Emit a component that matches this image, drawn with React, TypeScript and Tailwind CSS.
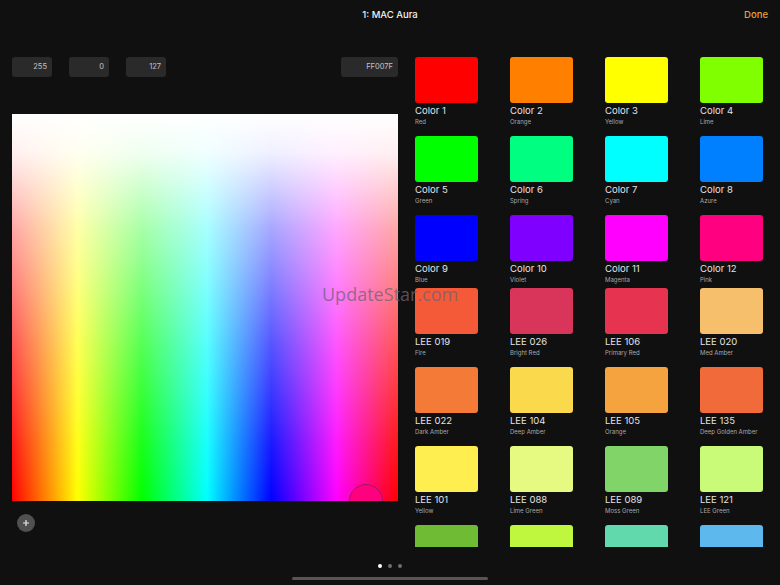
const font = { fontFamily: "Inter, 'Noto Sans', sans-serif" };

type Swatch = { name: string; sub: string; color: string };

const topColors: Swatch[] = [
  { name: "Color 1", sub: "Red", color: "#ff0000" },
  { name: "Color 2", sub: "Orange", color: "#ff8000" },
  { name: "Color 3", sub: "Yellow", color: "#ffff00" },
  { name: "Color 4", sub: "Lime", color: "#80ff00" },
  { name: "Color 5", sub: "Green", color: "#00ff00" },
  { name: "Color 6", sub: "Spring", color: "#00ff80" },
  { name: "Color 7", sub: "Cyan", color: "#00ffff" },
  { name: "Color 8", sub: "Azure", color: "#0080ff" },
  { name: "Color 9", sub: "Blue", color: "#0000ff" },
  { name: "Color 10", sub: "Violet", color: "#8000ff" },
  { name: "Color 11", sub: "Magenta", color: "#ff00ff" },
  { name: "Color 12", sub: "Pink", color: "#ff0080" },
];

const leeColors: Swatch[] = [
  { name: "LEE 019", sub: "Fire", color: "#f45a38" },
  { name: "LEE 026", sub: "Bright Red", color: "#d9345a" },
  { name: "LEE 106", sub: "Primary Red", color: "#e63450" },
  { name: "LEE 020", sub: "Med Amber", color: "#f5bf6c" },
  { name: "LEE 022", sub: "Dark Amber", color: "#f47a38" },
  { name: "LEE 104", sub: "Deep Amber", color: "#fbd94c" },
  { name: "LEE 105", sub: "Orange", color: "#f5a33f" },
  { name: "LEE 135", sub: "Deep Golden Amber", color: "#f16b3a" },
  { name: "LEE 101", sub: "Yellow", color: "#ffee50" },
  { name: "LEE 088", sub: "Lime Green", color: "#e6f981" },
  { name: "LEE 089", sub: "Moss Green", color: "#80d468" },
  { name: "LEE 121", sub: "LEE Green", color: "#c9fb78" },
];

// last row is cut off by the scroller, only the top of the swatches shows
const cutOffColors = ["#6fbb33", "#bff73f", "#62d9ac", "#5db8ee"];

function SwatchCell({ swatch }: { swatch: Swatch }) {
  return (
    <div className="h-[73px]">
      <div className="h-[46px] rounded-[3px]" style={{ backgroundColor: swatch.color }} />
      <div className="mt-[2px] text-[9.5px] leading-[12px] whitespace-nowrap text-[#e4e4e4]">{swatch.name}</div>
      <div className="text-[6px] leading-[9px] whitespace-nowrap text-[#a8a8a8]">{swatch.sub}</div>
    </div>
  );
}

function ValueBox({ value, width }: { value: string; width: string }) {
  return (
    <div className={`${width} flex h-5 items-center justify-end rounded-[3px] bg-[#2a2a2a] pr-[5px] text-[7.5px] text-[#c4c4c4]`}>
      {value}
    </div>
  );
}

export default function App() {
  return (
    <div className="relative flex h-[585px] w-[780px] flex-col overflow-hidden bg-[#101011]" style={font}>
      <div className="relative flex h-[57px] justify-center pt-[8px]">
        <span className="text-[9.5px] leading-[13px] font-medium text-[#f0f0f0]">1: MAC Aura</span>
        <span className="absolute top-[8px] right-[12px] text-[9.5px] leading-[13px] font-medium text-[#e5a137]">Done</span>
      </div>

      <div className="flex h-[490px]">
        <div className="ml-3 w-[386px]">
          <div className="flex gap-[17px]">
            <ValueBox value="255" width="w-10" />
            <ValueBox value="0" width="w-10" />
            <ValueBox value="127" width="w-10" />
            <div className="ml-auto">
              <ValueBox value="FF007F" width="w-[57px]" />
            </div>
          </div>
          <div className="relative mt-[37px] h-[387px] overflow-hidden bg-[linear-gradient(to_right,#ff0000_0%,#ffff00_17%,#00ff00_33.7%,#00ffff_50.5%,#0000ff_67.2%,#ff00ff_84%,#ff0000_100%)]">
            <div className="h-full bg-[linear-gradient(to_bottom,#ffffff_0%,rgba(255,255,255,0.94)_10%,rgba(255,255,255,0.65)_30%,rgba(255,255,255,0.33)_60%,rgba(255,255,255,0.1)_85%,rgba(255,255,255,0)_100%)]" />
            <div className="absolute top-[370px] left-[337px] size-[34px] rounded-full border border-[#9c1860] bg-[#ff007f]" />
          </div>
          <div className="mt-[13px] ml-[5px] flex size-[18px] items-center justify-center rounded-full bg-[#505050] text-[#e8e8e8]">
            <svg width="8" height="8" viewBox="0 0 8 8" fill="none" stroke="currentColor" strokeWidth="1.2">
              <path d="M4 1v6M1 4h6" />
            </svg>
          </div>
        </div>

        <div className="ml-[17px] h-[490px] overflow-hidden">
          <div className="grid grid-cols-[repeat(4,63px)] gap-x-8 gap-y-[6px]">
            {topColors.map((swatch) => (
              <SwatchCell key={swatch.name} swatch={swatch} />
            ))}
          </div>
          <div className="grid grid-cols-[repeat(4,63px)] gap-x-8 gap-y-[6px]">
            {leeColors.map((swatch) => (
              <SwatchCell key={swatch.name} swatch={swatch} />
            ))}
            {cutOffColors.map((color) => (
              <div key={color} className="h-[46px] rounded-[3px]" style={{ backgroundColor: color }} />
            ))}
          </div>
        </div>
      </div>

      <div className="mt-[17px] flex justify-center gap-[6px]">
        <div className="size-1 rounded-full bg-white" />
        <div className="size-1 rounded-full bg-[#6e6e6e]" />
        <div className="size-1 rounded-full bg-[#6e6e6e]" />
      </div>
      <div className="mx-auto mt-[9px] h-[3px] w-[196px] rounded-full bg-[#565656]" />

      <div className="absolute top-[285px] left-[322px] text-[18px] leading-[18px] text-[#70607a]/75" style={{ fontFamily: "'Open Sans', sans-serif" }}>
        UpdateStar.com
      </div>
    </div>
  );
}
